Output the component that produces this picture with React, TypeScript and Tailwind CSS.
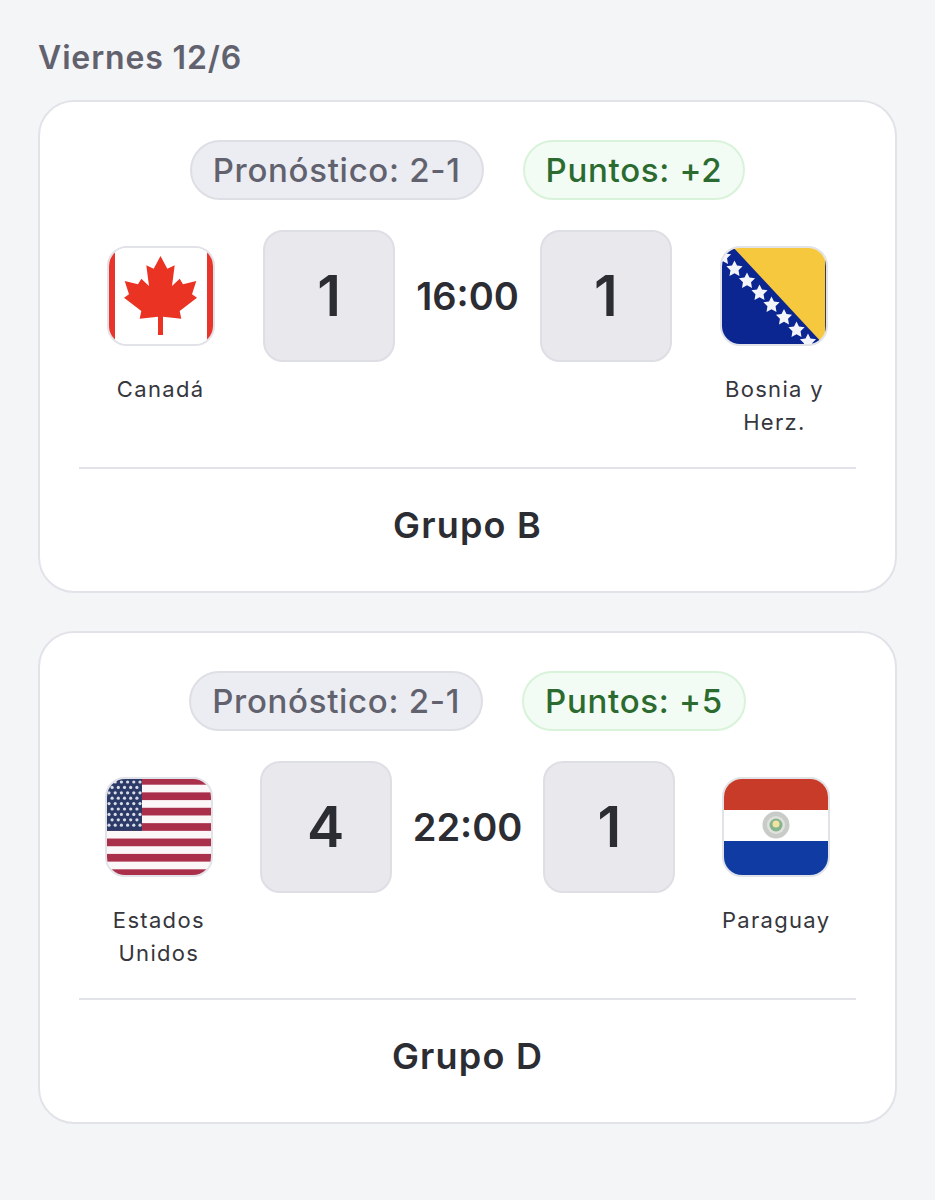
import { ReactNode } from "react";

function star(cx: number, cy: number, r: number) {
  const pts: string[] = [];
  for (let i = 0; i < 10; i++) {
    const a = -Math.PI / 2 + (i * Math.PI) / 5;
    const d = i % 2 === 0 ? r : r * 0.5;
    pts.push(`${cx + d * Math.cos(a)},${cy + d * Math.sin(a)}`);
  }
  return pts.join(" ");
}

function FlagCanada() {
  const leaf =
    "53.5,10 46.7,22.7 39.3,19.3 42,40 34.3,32.7 31,38.3 17.7,35 22,48.3 17,51.7 34.3,65 32.7,72.7 51,70.7 51,89 56,89 56,70.7 74.3,72.7 72.7,65 90,51.7 85,48.3 89.3,35 76,38.3 72.7,32.7 65,40 67.7,19.3 60.3,22.7";
  return (
    <svg viewBox="2 2 104 96" className="block h-full w-full blur-[0.4px]">
      <rect width="108" height="100" fill="#ffffff" />
      <rect width="8" height="100" fill="#e8352b" />
      <rect x="100" width="8" height="100" fill="#e8352b" />
      <polygon points={leaf} fill="#ea3323" />
    </svg>
  );
}

function FlagBosnia() {
  const stars = [
    [3, 11],
    [14.5, 23],
    [27, 35],
    [39.5, 47],
    [51.5, 59],
    [64, 71.5],
    [76.5, 84],
    [88, 96],
  ];
  return (
    <svg viewBox="2 2 104 96" className="block h-full w-full blur-[0.5px]">
      <rect width="108" height="100" fill="#0b2591" />
      <polygon points="12,0 108,0 108,100 105,100" fill="#f6c83e" />
      <rect x="105" width="1" height="100" fill="#3a3d4a" />
      {stars.map(([x, y]) => (
        <polygon key={x} points={star(x, y, 8.5)} fill="#f4f5fb" />
      ))}
    </svg>
  );
}

function FlagUsa() {
  const stripeH = 100 / 13;
  const dots: number[][] = [];
  for (let row = 0; row < 9; row++) {
    const count = row % 2 === 0 ? 6 : 5;
    for (let c = 0; c < count; c++) {
      dots.push([4 + c * 6.2 + (row % 2 === 0 ? 0 : 3.1), 5 + row * 5.4]);
    }
  }
  return (
    <svg viewBox="2 2 104 96" className="block h-full w-full blur-[0.6px]">
      <rect width="108" height="100" fill="#fbf6f7" />
      {Array.from({ length: 7 }).map((_, i) => (
        <rect key={i} y={i * 2 * stripeH} width="108" height={stripeH} fill="#a92f4b" />
      ))}
      <rect width="37" height={stripeH * 7} fill="#2b3a67" />
      {dots.map(([x, y]) => (
        <circle key={`${x}-${y}`} cx={x} cy={y} r="1.6" fill="#d9dde8" />
      ))}
    </svg>
  );
}

function FlagParaguay() {
  return (
    <svg viewBox="2 2 104 96" className="block h-full w-full blur-[0.5px]">
      <rect width="108" height="33" fill="#c73b28" />
      <rect y="33" width="108" height="31" fill="#ffffff" />
      <rect y="64" width="108" height="36" fill="#0f3ba3" />
      <circle cx="54" cy="48" r="13.5" fill="#c9cbc9" />
      <circle cx="54" cy="48" r="9" fill="#dfe3dc" />
      <circle cx="54" cy="48" r="6.5" fill="#86b48e" />
      <circle cx="54" cy="47" r="3.5" fill="#f3e3a0" />
    </svg>
  );
}

function Team({ flag, name }: { flag: ReactNode; name: string }) {
  return (
    <div className="flex flex-1 flex-col items-center pt-4">
      <div className="h-[100px] w-[108px] overflow-hidden rounded-[20px] border-2 border-[#e2e3e9]">{flag}</div>
      <p className="mt-[27px] text-center text-[22px] leading-[33px] tracking-[0.06em] text-[#36363d]">{name}</p>
    </div>
  );
}

function ScoreBox({ value }: { value: number }) {
  return (
    <div className="flex h-[132px] w-[132px] items-center justify-center rounded-[20px] border-2 border-[#dedee5] bg-[#e8e8ed] text-[56px] font-semibold text-[#2c2c33]">
      {value}
    </div>
  );
}

type MatchRow = {
  prediction: string;
  points: string;
  homeFlag: ReactNode;
  home: string;
  homeScore: number;
  time: string;
  awayScore: number;
  awayFlag: ReactNode;
  away: string;
  group: string;
};

function MatchCard({ match }: { match: MatchRow }) {
  return (
    <div className="rounded-[36px] border-2 border-[#e2e3e9] bg-white px-[39px] pt-[38px] pb-[45px]">
      <div className="flex justify-center gap-[39px]">
        <span className="flex h-[60px] items-center rounded-full border-2 border-[#dedee5] bg-[#ecedf2] px-[21px] pt-[2px] text-[33px] font-medium tracking-[0.7px] text-[#62626f]">
          Pronóstico: {match.prediction}
        </span>
        <span className="flex h-[60px] items-center rounded-full border-2 border-[#d8f3da] bg-[#f3fcf4] px-[21px] pt-[2px] text-[33px] font-medium tracking-[0.7px] text-[#2c6b2f]">
          Puntos: {match.points}
        </span>
      </div>
      <div className="mt-[30px] flex gap-[21px]">
        <Team flag={match.homeFlag} name={match.home} />
        <ScoreBox value={match.homeScore} />
        <div className="flex h-[132px] items-center text-[38px] font-semibold text-[#2c2c33]">{match.time}</div>
        <ScoreBox value={match.awayScore} />
        <Team flag={match.awayFlag} name={match.away} />
      </div>
      <div className="mt-[28px] border-t-2 border-[#e2e3e9] pt-[35px] text-center text-[36px] leading-[42px] font-semibold tracking-[1.2px] text-[#2c2c33]">
        {match.group}
      </div>
    </div>
  );
}

const matches: MatchRow[] = [
  {
    prediction: "2-1",
    points: "+2",
    homeFlag: <FlagCanada />,
    home: "Canadá",
    homeScore: 1,
    time: "16:00",
    awayScore: 1,
    awayFlag: <FlagBosnia />,
    away: "Bosnia y Herz.",
    group: "Grupo B",
  },
  {
    prediction: "2-1",
    points: "+5",
    homeFlag: <FlagUsa />,
    home: "Estados Unidos",
    homeScore: 4,
    time: "22:00",
    awayScore: 1,
    awayFlag: <FlagParaguay />,
    away: "Paraguay",
    group: "Grupo D",
  },
];

export default function App() {
  return (
    <div className="min-h-[1200px] bg-[#f4f5f7] px-[38px] pt-[38px] font-['Inter',sans-serif]">
      <h2 className="text-[32px] leading-[40px] font-semibold tracking-[0.85px] text-[#62626f]">Viernes 12/6</h2>
      <div className="mt-[22px] flex flex-col gap-[38px]">
        {matches.map((match) => (
          <MatchCard key={match.group} match={match} />
        ))}
      </div>
    </div>
  );
}
